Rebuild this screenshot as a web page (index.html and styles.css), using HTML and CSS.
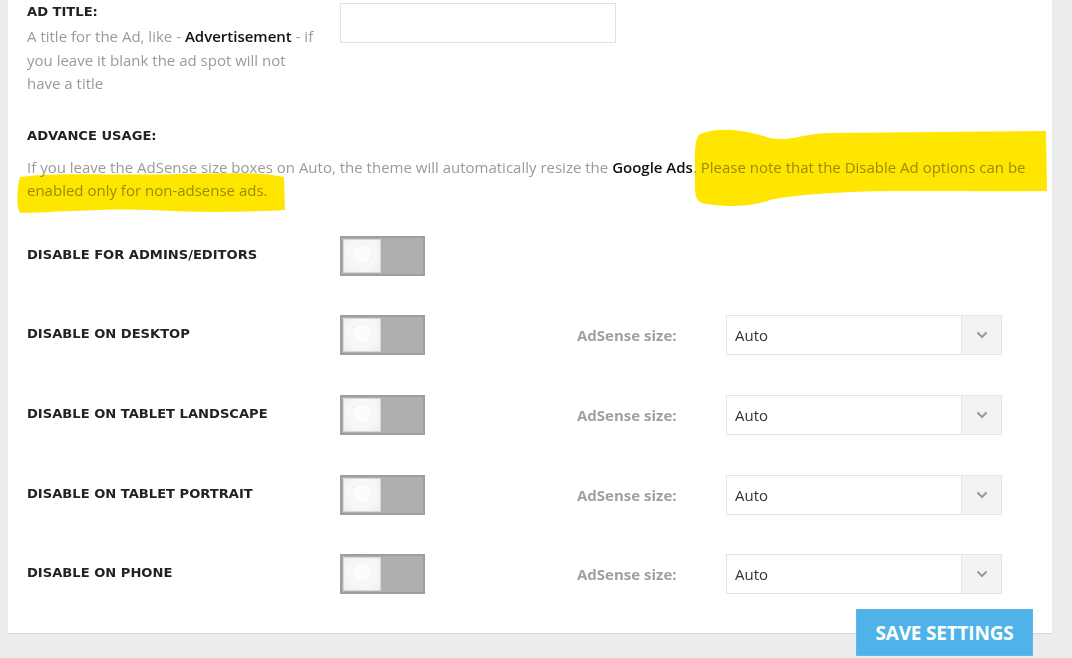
FILE: index.html
```html
<!DOCTYPE html>
<html>
<head>
<meta charset="utf-8">
<link rel="stylesheet" href="styles.css">
</head>
<body>
<div class="page">
  <div class="panel">
    <div class="row row-title">
      <div class="label-col">
        <div class="label">AD TITLE:</div>
        <div class="desc">A title for the Ad, like - <b>Advertisement</b> - if you leave it blank the ad spot will not have a title</div>
      </div>
      <input class="text-input" type="text">
    </div>

    <div class="advance">
      <div class="label">ADVANCE USAGE:</div>
      <p class="desc">If you leave the AdSense size boxes on Auto, the theme will automatically resize the <b>Google Ads</b>. Please note that the Disable Ad options can be enabled only for non-adsense ads.</p>
      <svg class="marker" width="1072" height="240" viewBox="0 0 1072 240">
        <path d="M700 132 C720 124 745 128 770 136 C790 140 800 132 830 131 L1046 129 L1047 189 C990 190 900 188 850 190 C810 192 790 194 770 198 C750 206 720 205 702 201 C694 198 695 190 695 170 C695 150 694 138 700 132 Z" fill="#ffe600"/>
        <path d="M20 175 C60 170 120 174 180 172 C230 171 260 170 284 175 L285 208 C250 210 200 211 150 208 C110 206 60 210 20 211 C16 205 17 185 20 175 Z" fill="#ffe600"/>
      </svg>
    </div>

    <div class="row opt">
      <div class="label-col"><div class="label">DISABLE FOR ADMINS/EDITORS</div></div>
      <div class="toggle"><span class="knob"></span></div>
    </div>

    <div class="row opt">
      <div class="label-col"><div class="label">DISABLE ON DESKTOP</div></div>
      <div class="toggle"><span class="knob"></span></div>
      <div class="size-label">AdSense size:</div>
      <div class="select"><span class="val">Auto</span><span class="arrow"><svg width="12" height="8" viewBox="0 0 12 8"><path d="M1.5 1.5 L6 6 L10.5 1.5" fill="none" stroke="#999" stroke-width="2"/></svg></span></div>
    </div>

    <div class="row opt">
      <div class="label-col"><div class="label">DISABLE ON TABLET LANDSCAPE</div></div>
      <div class="toggle"><span class="knob"></span></div>
      <div class="size-label">AdSense size:</div>
      <div class="select"><span class="val">Auto</span><span class="arrow"><svg width="12" height="8" viewBox="0 0 12 8"><path d="M1.5 1.5 L6 6 L10.5 1.5" fill="none" stroke="#999" stroke-width="2"/></svg></span></div>
    </div>

    <div class="row opt">
      <div class="label-col"><div class="label">DISABLE ON TABLET PORTRAIT</div></div>
      <div class="toggle"><span class="knob"></span></div>
      <div class="size-label">AdSense size:</div>
      <div class="select"><span class="val">Auto</span><span class="arrow"><svg width="12" height="8" viewBox="0 0 12 8"><path d="M1.5 1.5 L6 6 L10.5 1.5" fill="none" stroke="#999" stroke-width="2"/></svg></span></div>
    </div>

    <div class="row opt last">
      <div class="label-col"><div class="label">DISABLE ON PHONE</div></div>
      <div class="toggle"><span class="knob"></span></div>
      <div class="size-label">AdSense size:</div>
      <div class="select"><span class="val">Auto</span><span class="arrow"><svg width="12" height="8" viewBox="0 0 12 8"><path d="M1.5 1.5 L6 6 L10.5 1.5" fill="none" stroke="#999" stroke-width="2"/></svg></span></div>
    </div>
  </div>
  <button class="save">SAVE SETTINGS</button>
</div>
</body>
</html>
```

FILE: styles.css
```css
html, body {
  margin: 0;
  padding: 0;
  background: #ececec;
  height: 658px;
  overflow: hidden;
}
.page {
  position: relative;
  height: 658px;
}
.panel {
  margin-left: 8px;
  width: 1044px;
  height: 633px;
  background: #fff;
  box-shadow: 0 1px 1px rgba(0,0,0,0.08);
  box-sizing: border-box;
  padding: 0 19px;
  font-family: "Open Sans", sans-serif;
}
.row {
  display: flex;
  align-items: flex-start;
}
.label-col {
  width: 313px;
  flex: none;
}
.label {
  font-family: "DejaVu Sans", sans-serif;
  font-weight: bold;
  font-size: 13.1px;
  color: #222;
  line-height: 16px;
}
.desc {
  font-size: 15px;
  color: #9a9a9a;
  line-height: 23.5px;
  margin: 0;
}
.desc b {
  font-weight: 600;
  color: #111;
}
.row-title {
  padding-top: 4px;
}
.row-title .desc {
  width: 292px;
  margin-top: 5px;
}
.text-input {
  width: 276px;
  height: 40px;
  box-sizing: border-box;
  border: 1px solid #e2e2e2;
  margin: -1px 0 0 0;
  padding: 0;
  background: #fff;
  outline: none;
}
.advance {
  position: relative;
  margin-top: 32px;
}
.advance .desc {
  margin-top: 12px;
}
.marker {
  position: absolute;
  left: -27px;
  top: -126px;
  mix-blend-mode: multiply;
  pointer-events: none;
}
.opt {
  height: 79.7px;
}
.advance + .opt {
  margin-top: 33px;
}
.opt .label {
  padding-top: 11px;
}
.toggle {
  width: 85px;
  height: 40px;
  box-sizing: border-box;
  background: #afafaf;
  border: 2px solid #9e9e9e;
  padding: 1px;
  flex: none;
}
.knob {
  display: block;
  width: 38px;
  height: 34px;
  box-sizing: border-box;
  border: 1px solid #d6d6d6;
  background: radial-gradient(circle at 50% 45%, #fcfcfc 0, #fcfcfc 8px, #f5f5f5 10px, #f8f8f8 13px, #eeeeee 100%);
}
.size-label {
  margin-left: 152px;
  width: 149px;
  font-size: 15px;
  font-weight: bold;
  color: #a0a0a0;
  line-height: 40px;
  height: 40px;
}
.select {
  width: 276px;
  height: 40px;
  box-sizing: border-box;
  border: 1px solid #e4e4e4;
  display: flex;
  background: #fff;
}
.select .val {
  flex: 1;
  padding-left: 8px;
  font-size: 15px;
  color: #333;
  line-height: 38px;
}
.select .arrow {
  width: 39px;
  background: #f3f3f3;
  border-left: 1px solid #e4e4e4;
  display: flex;
  align-items: center;
  justify-content: center;
}
.save {
  position: absolute;
  left: 856px;
  top: 609px;
  width: 177px;
  height: 47px;
  background: #4fb3ea;
  border: 1px solid #5cb8ee;
  color: #fff;
  font-family: "Open Sans", sans-serif;
  font-weight: bold;
  font-size: 19px;
  padding: 0;
  letter-spacing: -0.2px;
}
```
